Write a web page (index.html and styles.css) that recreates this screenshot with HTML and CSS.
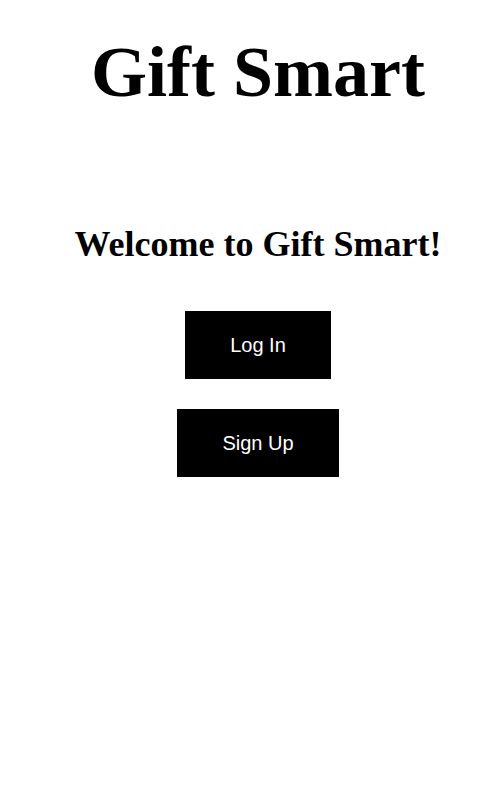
FILE: index.html
```html
<!DOCTYPE html>
<html>
<head>
<meta charset="utf-8">
<link rel="stylesheet" href="styles.css">
</head>
<body>
<div class="page">
  <h1 class="title">Gift Smart</h1>
  <h2 class="welcome">Welcome to Gift Smart!</h2>
  <div class="actions">
    <button class="btn">Log In</button>
    <button class="btn">Sign Up</button>
  </div>
</div>
</body>
</html>
```

FILE: styles.css
```css
body {
  margin: 0;
  background: #fff;
  font-family: "Liberation Serif", "Times New Roman", serif;
}
.page {
  display: flex;
  flex-direction: column;
  align-items: center;
  padding-left: 12px;
}
.title {
  margin: 31px 0 0;
  font-size: 72px;
  font-weight: bold;
  line-height: 83px;
}
.welcome {
  margin: 110px 0 0;
  font-size: 36px;
  font-weight: bold;
  line-height: 41px;
}
.actions {
  display: flex;
  flex-direction: column;
  align-items: center;
  gap: 30px;
  margin-top: 46px;
}
.btn {
  background: #000;
  color: #fff;
  border: none;
  font-family: "Liberation Sans", Arial, sans-serif;
  font-size: 20px;
  line-height: 23px;
  padding: 23px 45px 22px;
  cursor: pointer;
}
```
